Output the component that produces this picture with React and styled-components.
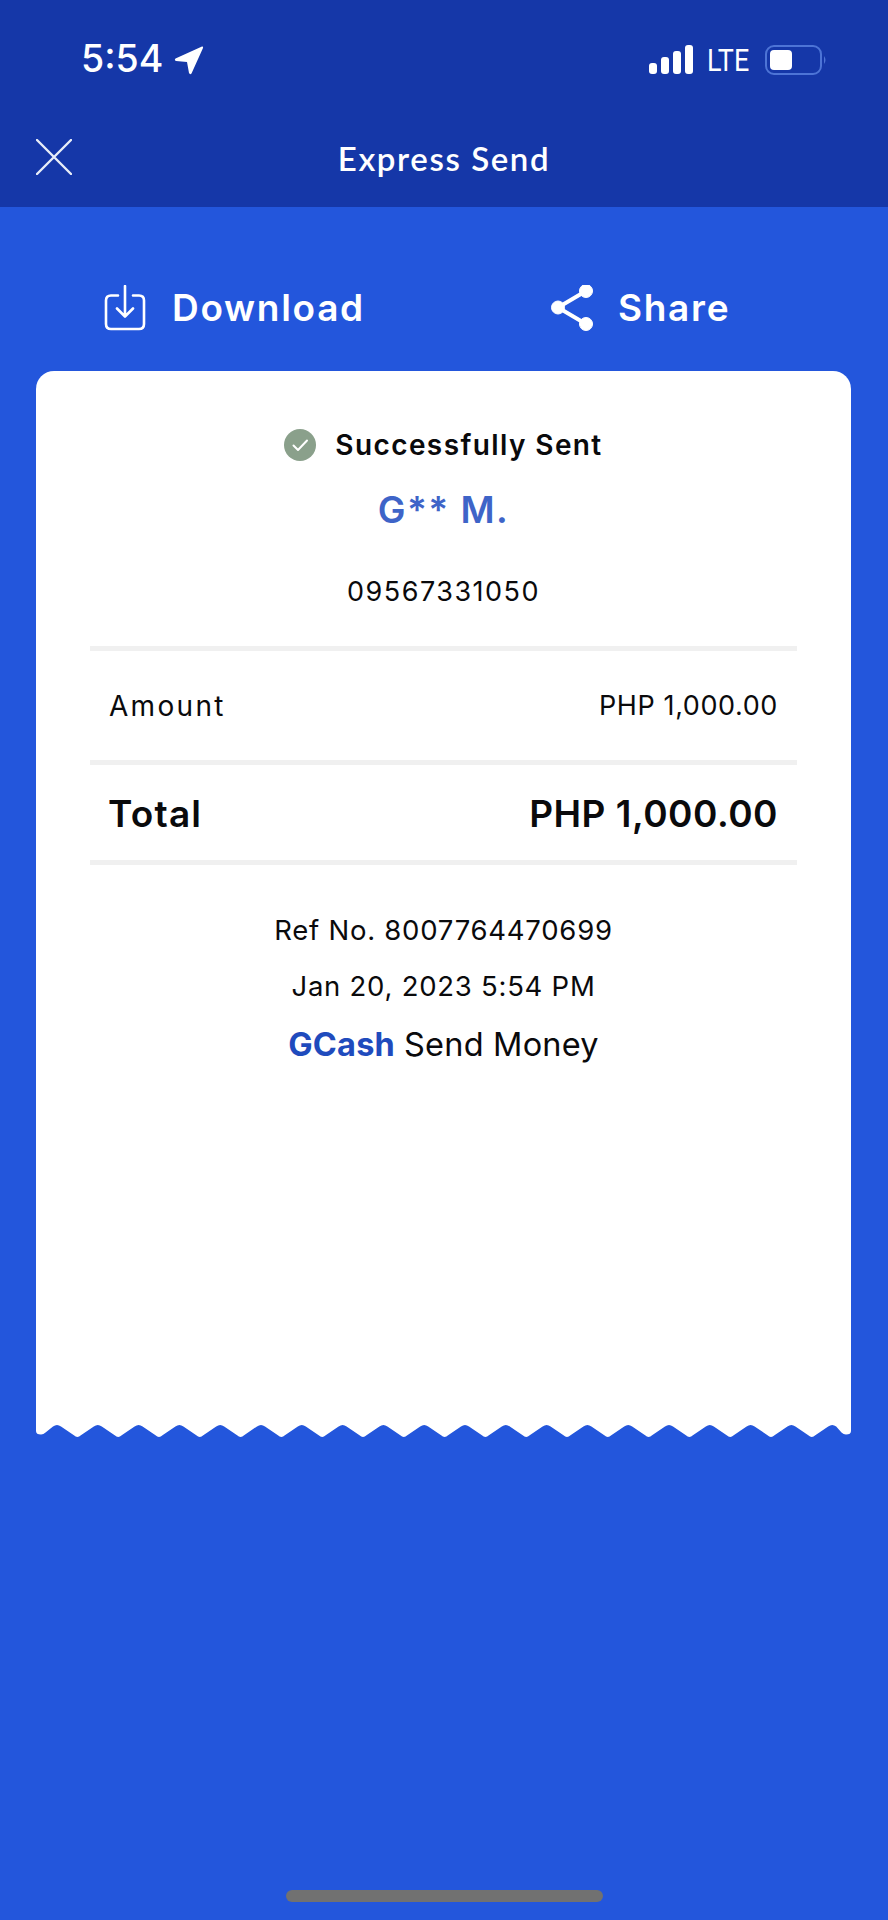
import React from "react";
import styled, { createGlobalStyle } from "styled-components";

const Global = createGlobalStyle`
  html, body { margin: 0; padding: 0; background: #2356dc; }
  body { font-family: Inter, "Liberation Sans", sans-serif; }
`;

const Page = styled.div`
  width: 888px;
  height: 1920px;
  display: flex;
  flex-direction: column;
  background: #2356dc;
  color: #fff;
  overflow: hidden;
`;
const Header = styled.header`
  height: 207px;
  background: #1537a8;
  display: flex;
  flex-direction: column;
`;
const StatusBar = styled.div`
  height: 120px;
  box-sizing: border-box;
  display: flex;
  align-items: center;
  justify-content: space-between;
  padding: 0 60px 0 81px;
`;
const TimeGroup = styled.div`
  display: flex;
  align-items: center;
  gap: 11px;
`;
const Time = styled.span`
  font-size: 37.5px;
  font-weight: 500;
  line-height: 40px;
  position: relative;
  top: -1px;
`;
const Signals = styled.div`
  display: flex;
  align-items: center;
`;
const Lte = styled.span`
  display: inline-block;
  width: 44px;
  margin: 0 14px;
  font-family: Roboto, "Liberation Sans", sans-serif;
  font-size: 32px;
  line-height: 36px;
  transform: scaleX(0.84);
  transform-origin: left center;
  white-space: nowrap;
`;
const TitleBar = styled.div`
  position: relative;
  height: 78px;
  display: flex;
  align-items: center;
  justify-content: center;
`;
const CloseIcon = styled.svg`
  position: absolute;
  left: 36px;
  top: 19px;
`;
const Title = styled.h1`
  margin: 0;
  font-family: Lato, sans-serif;
  font-size: 33px;
  font-weight: 600;
  letter-spacing: 1.6px;
  position: relative;
  top: -1px;
`;
const Actions = styled.div`
  height: 164px;
  box-sizing: border-box;
  padding: 37px 0 0 104px;
  display: grid;
  grid-template-columns: 447px 1fr;
  align-items: center;
`;
const Action = styled.div`
  display: flex;
  align-items: center;
  gap: ${(p) => p.$gap}px;
`;
const ActionLabel = styled.span`
  font-size: 37px;
  font-weight: 600;
  letter-spacing: 1.7px;
`;
const Receipt = styled.main`
  margin: 0 37px 0 36px;
  display: flex;
  flex-direction: column;
`;
const Sheet = styled.section`
  height: 1053px;
  background: #fff;
  color: #0a0a0c;
  border-radius: 18px 18px 0 0;
  box-sizing: border-box;
  padding: 56px 54px 0;
  display: flex;
  flex-direction: column;
`;
const Centered = styled.div`
  display: flex;
  align-items: center;
  justify-content: center;
  text-align: center;
  height: ${(p) => p.$h}px;
  margin-top: ${(p) => p.$top || 0}px;
`;
const SentLabel = styled.span`
  font-size: 28px;
  font-weight: 600;
  letter-spacing: 1.4px;
  margin-left: 19px;
`;
const Name = styled.span`
  font-size: 37px;
  font-weight: 600;
  color: #3e64c8;
  letter-spacing: 1.4px;
`;
const Phone = styled.span`
  font-size: 27px;
  letter-spacing: 1.5px;
`;
const Divider = styled.hr`
  height: 5px;
  border: 0;
  margin: ${(p) => p.$top || 0}px 0 0;
  background: #f0f0f0;
  flex: none;
`;
const Row = styled.div`
  height: ${(p) => p.$h}px;
  padding: 0 19px;
  display: flex;
  align-items: center;
  justify-content: space-between;
  font-size: ${(p) => (p.$bold ? 37 : 27)}px;
  font-weight: ${(p) => (p.$bold ? 600 : 400)};
  letter-spacing: ${(p) => (p.$bold ? 0.5 : 0.6)}px;
  padding-top: ${(p) => (p.$bold ? 2 : 0)}px;
  box-sizing: border-box;
`;
const AmountLabel = styled.span`
  font-size: 28px;
  letter-spacing: 2.3px;
`;
const TotalLabel = styled.span`
  letter-spacing: 1.2px;
  margin-left: -1px;
`;
const Meta = styled.span`
  font-size: 27.5px;
  letter-spacing: 0.75px;
`;
const Brand = styled.span`
  font-size: 32.5px;
  letter-spacing: 0.2px;
  display: inline-flex;
  gap: 9px;
`;
const BrandName = styled.b`
  font-weight: 700;
  color: #1f4bbd;
`;
const Wave = styled.svg`
  display: block;
`;
const HomeBar = styled.div`
  position: absolute;
  left: 286px;
  top: 1890px;
  width: 317px;
  height: 12px;
  border-radius: 6px;
  background: #717171;
`;

function wavePath() {
  const period = 40.8;
  const w = 815;
  let d = `M0 0 H${w} V7 Q${w} 10.5 ${w - 5} 10.5 Q${w - 7.5} 10.5 ${w - 9.5} 8.6 `;
  for (let i = 19; i >= 0; i--) {
    const peak = 21 + i * period;
    const bottom = peak - period / 2;
    d += `L${peak + 4} 2.4 Q${peak} -0.6 ${peak - 4} 2.4 `;
    if (i === 0) {
      d += `L9.5 8.6 Q7.5 10.5 5 10.5 Q0 10.5 0 7 Z`;
    } else {
      d += `L${bottom + 3.5} 11.2 Q${bottom} 14.6 ${bottom - 3.5} 11.2 `;
    }
  }
  return d;
}

export default function App() {
  return (
    <Page>
      <Global />
      <Header>
        <StatusBar>
          <TimeGroup>
            <Time>5:54</Time>
            <svg width="30" height="30" viewBox="0 0 30 30" aria-hidden="true">
              <path d="M28 1.5 L1.5 13.5 Q0 15 2 16 L13 17 L15 28 Q16 30 17.5 28.5 L29 3 Q29.5 1 28 1.5 Z" fill="#fff" />
            </svg>
          </TimeGroup>
          <Signals>
            <svg width="44" height="30" viewBox="0 0 44 30" aria-hidden="true" fill="#fff">
              <rect x="0" y="18" width="8" height="11" rx="3" />
              <rect x="12" y="12" width="8" height="17" rx="3" />
              <rect x="24" y="6" width="8" height="23" rx="3" />
              <rect x="36" y="0" width="8" height="29" rx="3" />
            </svg>
            <Lte>LTE</Lte>
            <svg width="63" height="31" viewBox="0 0 63 31" aria-hidden="true">
              <rect x="1" y="1" width="55" height="28" rx="8" fill="none" stroke="#4d74d6" strokeWidth="2" />
              <rect x="5" y="5" width="22" height="20" rx="4" fill="#fff" />
              <path d="M59 11 Q62 15 59 19 Z" fill="#4d74d6" />
            </svg>
          </Signals>
        </StatusBar>
        <TitleBar>
          <CloseIcon width="36" height="36" viewBox="0 0 36 36" aria-hidden="true">
            <path d="M1 1 L35 35 M35 1 L1 35" stroke="#e8edf8" strokeWidth="2.4" strokeLinecap="round" />
          </CloseIcon>
          <Title>Express Send</Title>
        </TitleBar>
      </Header>

      <Actions>
        <Action $gap={26}>
          <svg width="42" height="46" viewBox="0 0 42 46" aria-hidden="true" fill="none" stroke="#fff" strokeWidth="2.6" strokeLinecap="round" strokeLinejoin="round">
            <path d="M14 10.5 H7 Q2 10.5 2 15.5 V39 Q2 44 7 44 H35 Q40 44 40 39 V15.5 Q40 10.5 35 10.5 H29" />
            <path d="M21 1 V31 M13 23.5 L21 31.5 L29 23.5" />
          </svg>
          <ActionLabel>Download</ActionLabel>
        </Action>
        <Action $gap={25}>
          <svg width="42" height="46" viewBox="0 0 42 46" aria-hidden="true" fill="#fff" stroke="#fff">
            <path d="M35 6 L7 22.5 L35 39" fill="none" strokeWidth="4" />
            <circle cx="35" cy="6" r="6.5" />
            <circle cx="7" cy="22.5" r="6.5" />
            <circle cx="35" cy="39" r="6.5" />
          </svg>
          <ActionLabel>Share</ActionLabel>
        </Action>
      </Actions>

      <Receipt>
        <Sheet>
          <Centered $h={36}>
            <svg width="32" height="32" viewBox="0 0 32 32" aria-hidden="true">
              <circle cx="16" cy="16" r="16" fill="#8aa08b" />
              <path d="M9.5 16.5 L14 21 L23 11.5" fill="none" stroke="#fff" strokeWidth="2" strokeLinecap="round" strokeLinejoin="round" />
            </svg>
            <SentLabel>Successfully Sent</SentLabel>
          </Centered>
          <Centered $h={50} $top={21}><Name>G** M.</Name></Centered>
          <Centered $h={40} $top={37}><Phone>09567331050</Phone></Centered>
          <Divider $top={35} />
          <Row $h={109}>
            <AmountLabel>Amount</AmountLabel>
            <span>PHP 1,000.00</span>
          </Row>
          <Divider />
          <Row $h={95} $bold>
            <TotalLabel>Total</TotalLabel>
            <span>PHP 1,000.00</span>
          </Row>
          <Divider />
          <Centered $h={40} $top={45}><Meta>Ref No. 8007764470699</Meta></Centered>
          <Centered $h={40} $top={16}><Meta>Jan 20, 2023 5:54 PM</Meta></Centered>
          <Centered $h={40} $top={18}>
            <Brand>
              <BrandName>GCash</BrandName>
              <span>Send Money</span>
            </Brand>
          </Centered>
        </Sheet>
        <Wave width="815" height="15" viewBox="0 0 815 15" aria-hidden="true">
          <path d={wavePath()} fill="#fff" />
        </Wave>
      </Receipt>
      <HomeBar />
    </Page>
  );
}
